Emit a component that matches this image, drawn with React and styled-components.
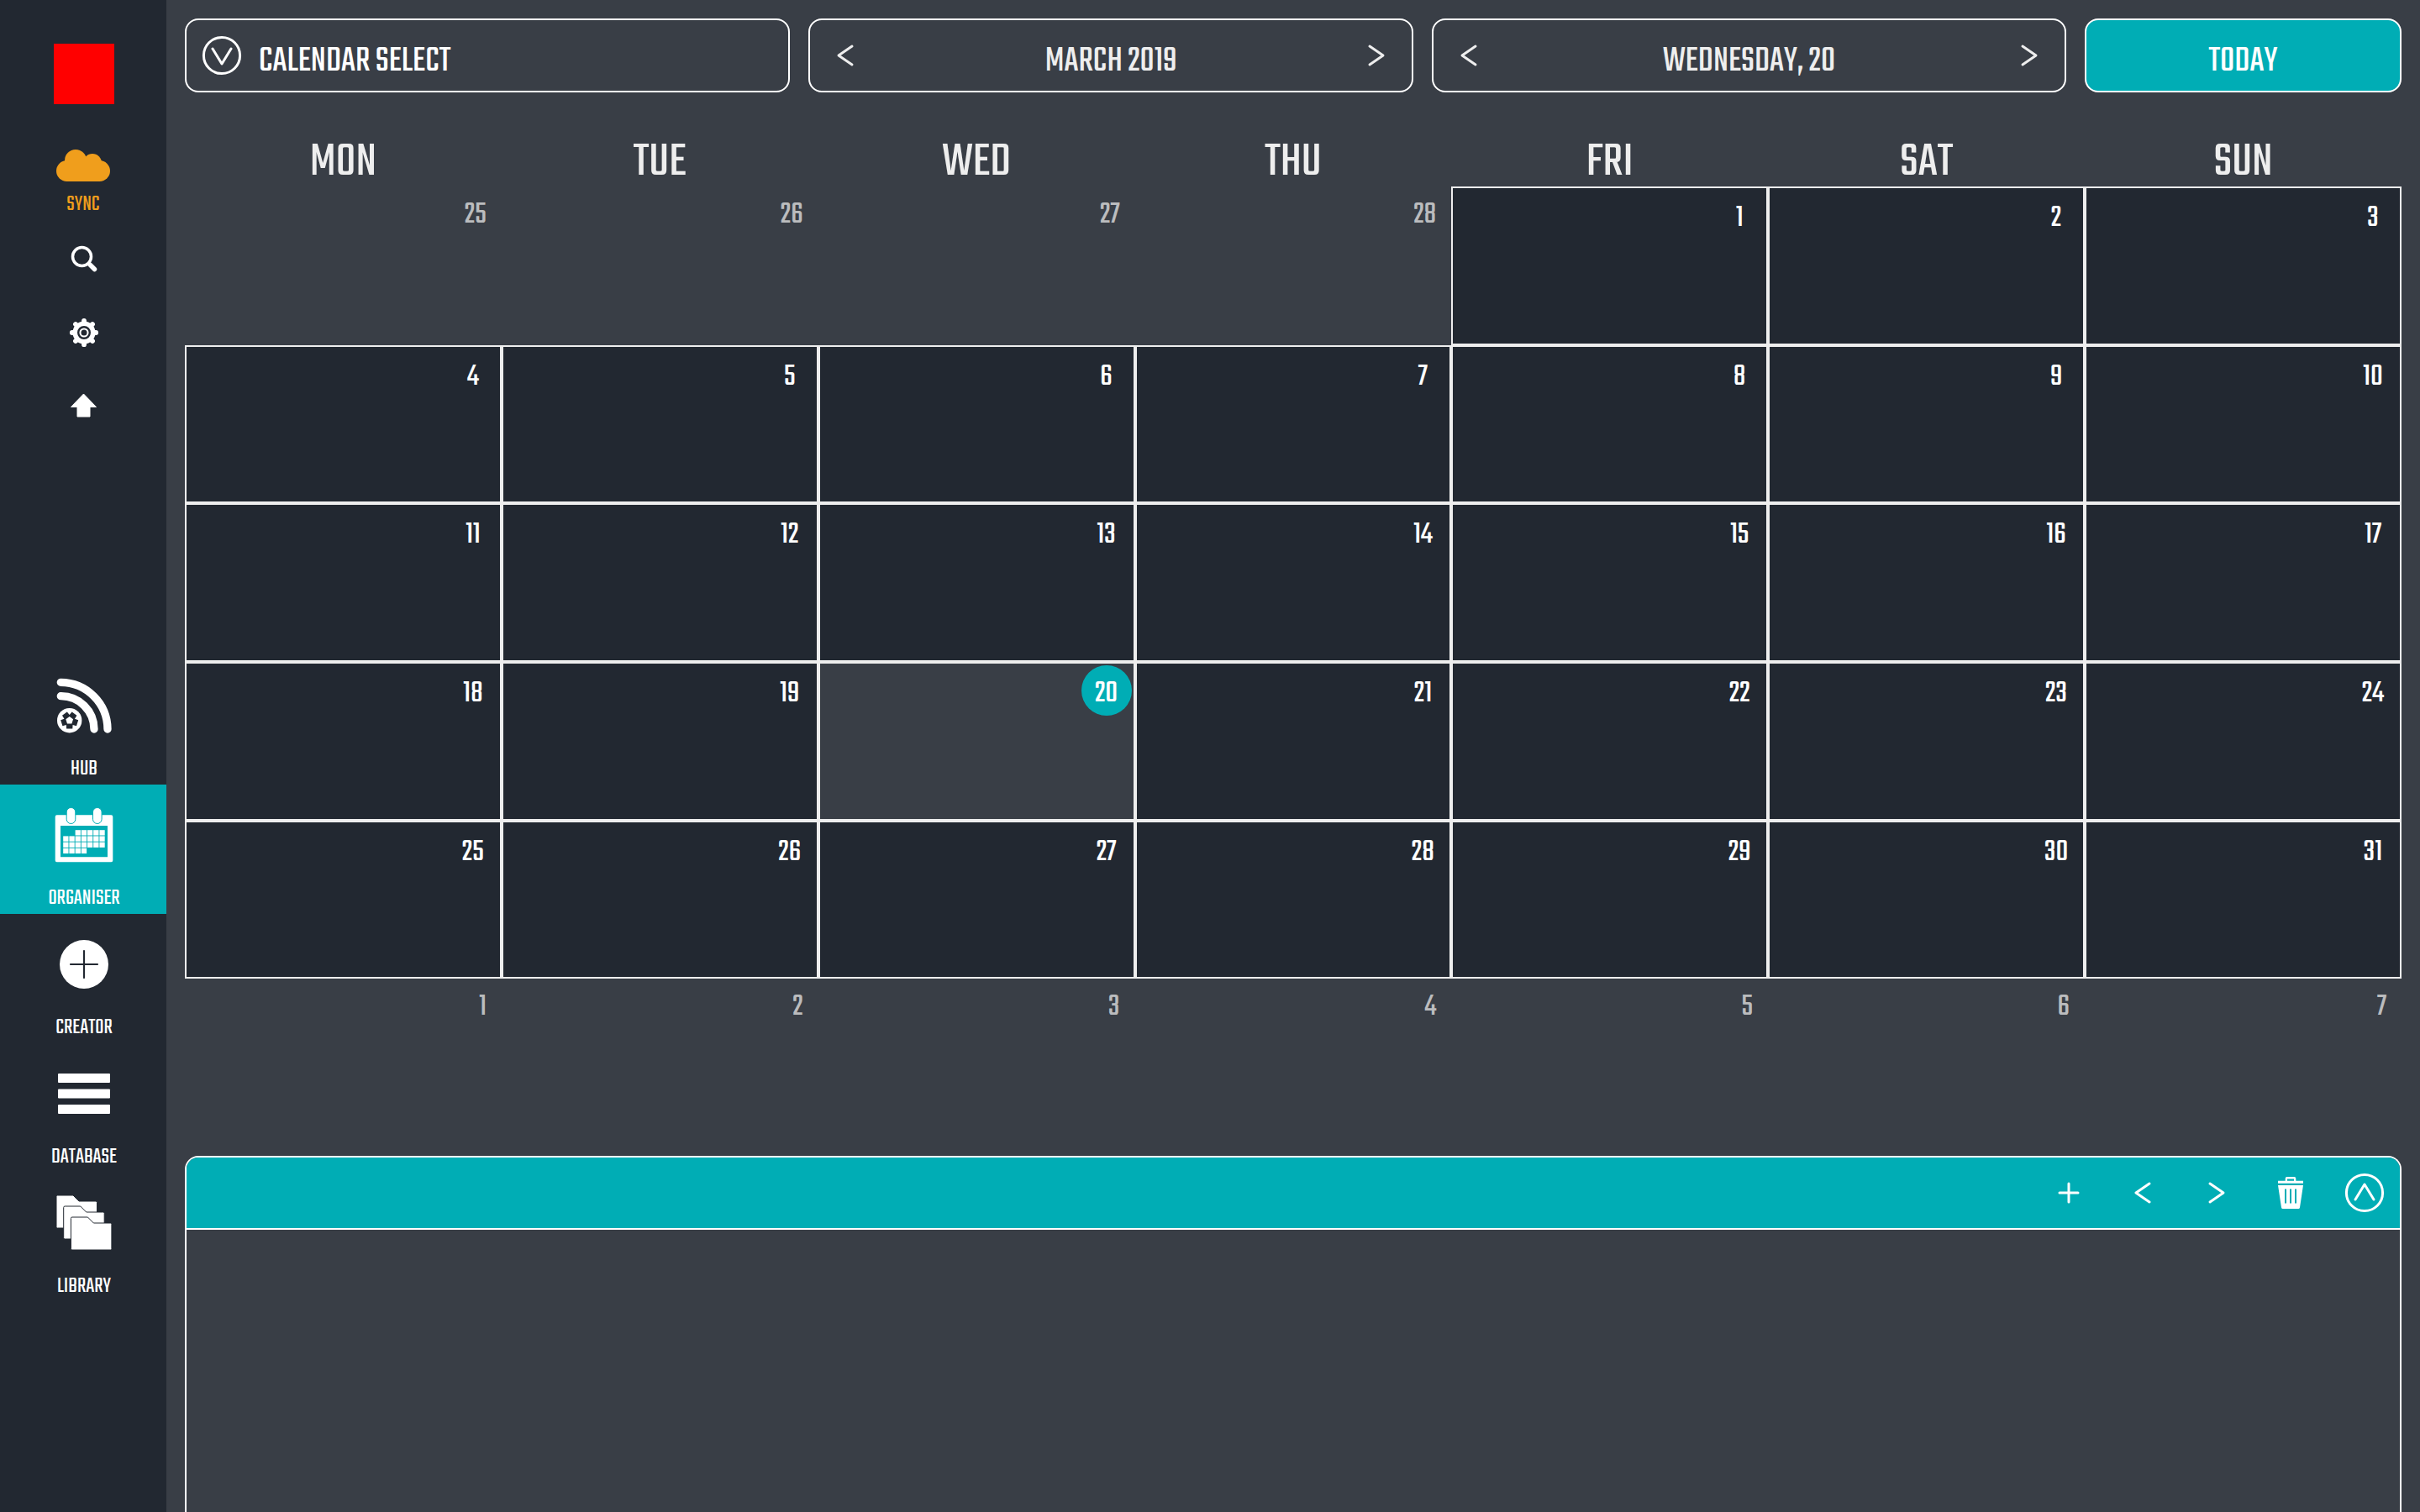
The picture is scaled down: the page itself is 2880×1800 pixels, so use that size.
import React from 'react';
import styled, { createGlobalStyle, css } from 'styled-components';

const DARK = '#222831';
const GREY = '#393e46';
const TEAL = '#00adb5';
const LIGHT = '#eeeeee';
const ORANGE = '#f09e1c';

const GlobalStyle = createGlobalStyle`
  * {
    box-sizing: border-box;
  }
  body {
    margin: 0;
    background: ${GREY};
    color: #fff;
    font-family: 'Teko', 'Roboto Condensed', sans-serif;
  }
  button {
    padding: 0;
    border: 0;
    background: none;
    color: inherit;
    font: inherit;
    cursor: pointer;
  }
  svg {
    display: block;
  }
`

const AppS = styled.div`
  display: flex;
  height: 100vh;
  overflow: hidden;
`

/* sidebar */
const SidebarS = styled.aside`
  display: flex;
  flex-direction: column;
  flex: 0 0 198px;
  background: ${DARK};
`

const LogoBoxS = styled.div`
  display: flex;
  align-items: center;
  justify-content: center;
  height: 176px;
  padding-left: 2px;
`

const LogoS = styled.div`
  width: 72px;
  height: 72px;
  background: #ff0000;
`

const ToolButtonS = styled.button`
  display: flex;
  flex-direction: column;
  align-items: center;
  justify-content: center;
  height: 88px;

  && {
    padding-left: 2px;
  }
`

const SyncButtonS = styled.button`
  display: flex;
  flex-direction: column;
  align-items: center;
  gap: 12px;
  height: 88px;

  && {
    padding-top: 2px;
    color: ${ORANGE};
  }
`

const LabelS = styled.span`
  font-size: 26px;
  line-height: 32px;
`

const NavS = styled.nav`
  margin-top: 252px;
`

const NavLinkS = styled.a`
  display: flex;
  flex-direction: column;
  align-items: center;
  gap: 24px;
  height: 154px;
  padding: 24px 0 0 2px;
  background: ${({ $active }) => ($active ? TEAL : 'transparent')};
  color: #fff;
  text-decoration: none;
`

/* main column */
const MainS = styled.main`
  display: flex;
  flex-direction: column;
  flex: 1;
  min-width: 0;
  padding: 22px 22px 0;
`

const TopBarS = styled.header`
  display: grid;
  grid-template-columns: 84fr 84fr 88fr 44fr;
  gap: 22px;
`

const boxStyle = css`
  display: flex;
  align-items: center;
  height: 88px;
  border: 2px solid #fff;
  border-radius: 16px;
  font-size: 44px;
  line-height: 64px;
`

const SelectButtonS = styled.button`
  && {
    ${boxStyle}
  }
`

const TodayButtonS = styled.button`
  && {
    ${boxStyle}
    justify-content: center;
    background: ${TEAL};
  }
`

const StepperS = styled.div`
  ${boxStyle}
  justify-content: space-between;
  color: ${LIGHT};
`

const IconButtonS = styled.button`
  display: flex;
  align-items: center;
  justify-content: center;
  width: 88px;
  height: 84px;
  margin: 0 -2px;
`

const IconBoxS = styled.span`
  display: flex;
  justify-content: center;
  width: 88px;
  margin-left: -2px;
`

const BoxTextS = styled.span`
  padding-top: 16px;
`

/* calendar */
const CalendarS = styled.table`
  width: 100%;
  height: 1244px;
  table-layout: fixed;
  border-spacing: 0;
`

const WeekdayS = styled.th`
  height: 112px;
  padding: 56px 0 0;
  color: ${LIGHT};
  font-size: 60px;
  font-weight: 400;
  line-height: 56px;
`

const DayS = styled.td`
  height: 188px;
  padding: 2px;
  border: 2px solid ${LIGHT};
  background: ${({ $today }) => ($today ? GREY : DARK)};
  font-size: 38px;
  line-height: 60px;
  vertical-align: top;
`

const OtherDayS = styled.td`
  height: 188px;
  padding: 4px 18px;
  color: #bbbcbe;
  font-size: 38px;
  line-height: 60px;
  text-align: right;
  vertical-align: top;
`

const DateS = styled.span`
  display: block;
  width: 60px;
  height: 60px;
  margin-left: auto;
  padding-top: 4px;
  border-radius: 50%;
  background: ${({ $today }) => ($today ? TEAL : 'transparent')};
  text-align: center;
`

/* bottom panel */
const PanelS = styled.section`
  flex: 1;
  margin-top: 22px;
  border: 2px solid #fff;
  border-bottom: 0;
  border-radius: 16px 16px 0 0;
  overflow: hidden;
`

const PanelHeadS = styled.div`
  display: flex;
  justify-content: flex-end;
  height: 86px;
  border-bottom: 2px solid #fff;
  background: ${TEAL};
`

const PanelButtonS = styled.button`
  display: flex;
  align-items: center;
  justify-content: center;
  width: 88px;

  &:last-child {
    margin-right: -2px;
  }
`

/* icons */
const Line = ({ children, width = 3 }) => (
  <svg width="48" height="48" viewBox="-24 -24 48 48" fill="none" stroke="currentColor" strokeWidth={width} strokeLinecap="round" strokeLinejoin="round" aria-hidden="true">
    {children}
  </svg>
)

const Glyph = ({ children }) => (
  <svg width="72" height="72" viewBox="0 0 72 72" fill="currentColor" aria-hidden="true">
    {children}
  </svg>
)

const LeftIcon = () => <Line><path d="M8 -11L-8 0L8 11" /></Line>
const RightIcon = () => <Line><path d="M-8 -11L8 0L-8 11" /></Line>
const PlusIcon = () => <Line><path d="M-11 0H11M0 -11V11" /></Line>
const DownIcon = () => <Line><circle r="21.6" /><path d="M-11 -8L0 10L11 -8" /></Line>
const UpIcon = () => <Line><circle r="21.6" /><path d="M-11 8L0 -10L11 8" /></Line>

const TrashIcon = () => (
  <svg width="40" height="40" viewBox="0 0 40 40" fill="currentColor" aria-hidden="true">
    <path d="M5 5.7h8.7V3a2 2 0 0 1 2-2h8.6a2 2 0 0 1 2 2v2.7H35v3H5zM16 5.7h8V3.6h-8z" fillRule="evenodd" />
    <path d="M5 11h30l-4 26.5a1.8 1.8 0 0 1-1.8 1.5H10.8a1.8 1.8 0 0 1-1.8-1.5z" />
    <path d="M14 15.5V32.5M20 15.5V32.5M26 15.5V32.5" stroke={TEAL} strokeWidth="2" />
  </svg>
)

const CloudIcon = () => (
  <svg width="64" height="38" viewBox="0 0 64 38" fill="currentColor" aria-hidden="true">
    <circle cx="23" cy="13" r="13" />
    <circle cx="43" cy="16" r="11" />
    <circle cx="12.5" cy="25.5" r="12.5" />
    <circle cx="51.5" cy="25.5" r="12.5" />
    <path d="M12 13h40v25H12z" />
  </svg>
)

const SearchIcon = () => (
  <svg width="34" height="34" viewBox="83 291 34 34" fill="none" stroke="currentColor" strokeLinecap="round" aria-hidden="true">
    <circle cx="97.5" cy="305.5" r="11" strokeWidth="3.5" />
    <path d="M107.5 315.5L112.5 320.5" strokeWidth="5.5" />
  </svg>
)

const GearIcon = () => (
  <svg width="36" height="36" viewBox="-18 -18 36 36" fill="currentColor" aria-hidden="true">
    <circle r="13.5" />
    {[0, 45, 90, 135, 180, 225, 270, 315].map((angle) => (
      <path key={angle} d="M0 -12V-14.2" stroke="currentColor" strokeWidth="5.8" strokeLinecap="round" transform={`rotate(${angle})`} />
    ))}
    <circle r="6.8" fill="none" stroke={DARK} strokeWidth="2.4" />
    <circle r="3.5" fill={DARK} />
  </svg>
)

const UploadIcon = () => (
  <svg width="32" height="32" viewBox="0 0 32 32" fill="currentColor" stroke="currentColor" strokeLinejoin="round" aria-hidden="true">
    <path d="M15.500 1L30.500 16.500H23V28H8V16.500H0.500Z" />
  </svg>
)

const polar = (r, deg) => {
  const a = (deg * Math.PI) / 180
  return `${(18.7 + r * Math.cos(a)).toFixed(2)},${(53.7 + r * Math.sin(a)).toFixed(2)}`
}
const sides = [-54, 18, 90, 162, 234]
const ballPatch = sides.map((a) => `${polar(10.5, a - 20)} ${polar(10.5, a + 20)} ${polar(6.6, a + 36)}`).join(' ')
const ballCenter = sides.map((a) => polar(4.6, a + 36)).join(' ')

const HubIcon = () => (
  <Glyph>
    <path d="M8.3 8.3A56 56 0 0 1 64 64M8.3 24.7A39.5 39.5 0 0 1 48 64" fill="none" stroke="currentColor" strokeWidth="9.3" strokeLinecap="round" />
    <circle cx="18.7" cy="53.7" r="14.7" />
    <polygon points={ballPatch} fill={DARK} />
    <polygon points={ballCenter} />
  </Glyph>
)

const calendarDots = [[2, 6], [0, 6], [0, 6], [0, 3]]

const OrganiserIcon = () => (
  <Glyph>
    <path d="M3.7 12.3H68.3a2 2 0 0 1 2 2V66.3a2 2 0 0 1-2 2H3.7a2 2 0 0 1-2-2V14.3a2 2 0 0 1 2-2zM8 25V62.3H64V25z" fillRule="evenodd" />
    <rect x="15.2" y="3.5" width="10.6" height="19" rx="5.3" stroke={TEAL} />
    <rect x="46.5" y="3.5" width="10.6" height="19" rx="5.3" stroke={TEAL} />
    {calendarDots.map(([from, to], row) => (
      Array.from({ length: to - from + 1 }, (_, i) => (
        <rect key={`${row}-${i}`} x={11.2 + (from + i) * 7.2} y={30.2 + row * 7.2} width="6.3" height="6.3" />
      ))
    ))}
  </Glyph>
)

const CreatorIcon = () => (
  <Glyph>
    <circle cx="36" cy="36" r="29" />
    <path d="M20 36H52M36 20V52" stroke={DARK} strokeWidth="2.2" strokeLinecap="round" />
  </Glyph>
)

const DatabaseIcon = () => (
  <Glyph>
    <rect x="5" y="12" width="62" height="11" rx="1" />
    <rect x="5" y="30.5" width="62" height="11" rx="1" />
    <rect x="5" y="49" width="62" height="11" rx="1" />
  </Glyph>
)

const LibraryIcon = () => (
  <Glyph>
    {[[2.5, 3], [11.2, 16], [19.9, 29]].map(([x, y]) => (
      <path key={x} d="M2 0H20.5L27.5 7H47.5a1.5 1.5 0 0 1 1.5 1.5V37.5a1.5 1.5 0 0 1-1.5 1.5H2a1.5 1.5 0 0 1-1.5-1.5V1.5a1.5 1.5 0 0 1 1.5-1.5z" stroke={DARK} transform={`translate(${x} ${y})`} />
    ))}
  </Glyph>
)

const navItems = [
  { label: 'HUB', Icon: HubIcon },
  { label: 'ORGANISER', Icon: OrganiserIcon, active: true },
  { label: 'CREATOR', Icon: CreatorIcon },
  { label: 'DATABASE', Icon: DatabaseIcon },
  { label: 'LIBRARY', Icon: LibraryIcon },
]

const weekdays = ['MON', 'TUE', 'WED', 'THU', 'FRI', 'SAT', 'SUN']
const TODAY = 20

// March 2019 starts on a friday, so four days of february come first
const days = Array.from({ length: 42 }, (_, i) => {
  if (i < 4) return { date: 25 + i, other: true }
  if (i > 34) return { date: i - 34, other: true }
  return { date: i - 3, other: false }
})
const weeks = [0, 1, 2, 3, 4, 5].map((w) => days.slice(w * 7, w * 7 + 7))

const Sidebar = () => (
  <SidebarS>
    <LogoBoxS><LogoS /></LogoBoxS>
    <SyncButtonS type="button">
      <CloudIcon />
      <LabelS>SYNC</LabelS>
    </SyncButtonS>
    <ToolButtonS type="button" aria-label="Search"><SearchIcon /></ToolButtonS>
    <ToolButtonS type="button" aria-label="Settings"><GearIcon /></ToolButtonS>
    <ToolButtonS type="button" aria-label="Upload"><UploadIcon /></ToolButtonS>
    <NavS>
      {navItems.map(({ label, Icon, active }) => (
        <NavLinkS key={label} href="#!" $active={active}>
          <Icon />
          <LabelS>{label}</LabelS>
        </NavLinkS>
      ))}
    </NavS>
  </SidebarS>
)

const Stepper = ({ name, children }) => (
  <StepperS>
    <IconButtonS type="button" aria-label={`Previous ${name}`}><LeftIcon /></IconButtonS>
    <BoxTextS>{children}</BoxTextS>
    <IconButtonS type="button" aria-label={`Next ${name}`}><RightIcon /></IconButtonS>
  </StepperS>
)

const Calendar = () => (
  <CalendarS>
    <thead>
      <tr>{weekdays.map((day) => <WeekdayS key={day} scope="col">{day}</WeekdayS>)}</tr>
    </thead>
    <tbody>
      {weeks.map((week, i) => (
        <tr key={i}>
          {week.map(({ date, other }) => (
            other
              ? <OtherDayS key={date}>{date}</OtherDayS>
              : (
                <DayS key={date} $today={date === TODAY}>
                  <DateS $today={date === TODAY}>{date}</DateS>
                </DayS>
              )
          ))}
        </tr>
      ))}
    </tbody>
  </CalendarS>
)

const App = () => {
  return (
    <>
      <GlobalStyle />
      <AppS>
        <Sidebar />
        <MainS>
          <TopBarS>
            <SelectButtonS type="button">
              <IconBoxS><DownIcon /></IconBoxS>
              <BoxTextS>CALENDAR SELECT</BoxTextS>
            </SelectButtonS>
            <Stepper name="month">MARCH 2019</Stepper>
            <Stepper name="day">WEDNESDAY, 20</Stepper>
            <TodayButtonS type="button"><BoxTextS>TODAY</BoxTextS></TodayButtonS>
          </TopBarS>
          <Calendar />
          <PanelS>
            <PanelHeadS>
              <PanelButtonS type="button" aria-label="Add"><PlusIcon /></PanelButtonS>
              <PanelButtonS type="button" aria-label="Previous"><LeftIcon /></PanelButtonS>
              <PanelButtonS type="button" aria-label="Next"><RightIcon /></PanelButtonS>
              <PanelButtonS type="button" aria-label="Delete"><TrashIcon /></PanelButtonS>
              <PanelButtonS type="button" aria-label="Collapse"><UpIcon /></PanelButtonS>
            </PanelHeadS>
          </PanelS>
        </MainS>
      </AppS>
    </>
  )
}

export default App;
